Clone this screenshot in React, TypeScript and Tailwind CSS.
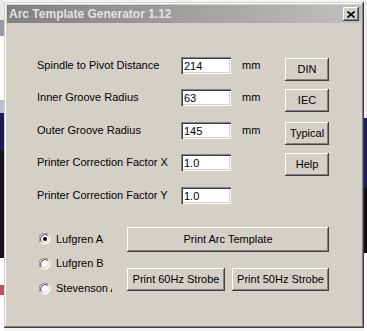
import React from 'react';

const font = { fontFamily: '"Liberation Sans", Arial, sans-serif' };

function Button({ label, className }: { label: string; className: string }) {
  return (
    <button
      className={`flex items-center justify-center bg-[#d4d0c8] text-[11px] text-black shadow-[inset_-1px_-1px_#404040,inset_1px_1px_#ffffff,inset_-2px_-2px_#808080,inset_2px_2px_#d4d0c8] ${className}`}
    >
      {label}
    </button>
  );
}

function Field({ value }: { value: string }) {
  return (
    <input
      defaultValue={value}
      className="h-[17px] w-[50px] bg-white pl-[3px] text-[11px] text-black outline-none shadow-[inset_1px_1px_#808080,inset_2px_2px_#404040,inset_-1px_-1px_#ffffff,inset_-2px_-2px_#d4d0c8]"
    />
  );
}

function Radio({ checked }: { checked?: boolean }) {
  return (
    <svg width="12" height="12" viewBox="0 0 12 12" className="shrink-0">
      <circle cx="6" cy="6" r="5" fill="#ffffff" />
      <path d="M1.6 9.5 A5.5 5.5 0 0 1 9.5 1.6" stroke="#808080" strokeWidth="1" fill="none" />
      <path d="M9.5 1.6 A5.5 5.5 0 0 1 1.6 9.5" stroke="#ffffff" strokeWidth="1" fill="none" />
      <path d="M2.5 8.8 A4.5 4.5 0 0 1 8.8 2.5" stroke="#404040" strokeWidth="1" fill="none" />
      <path d="M8.8 2.5 A4.5 4.5 0 0 1 2.5 8.8" stroke="#d4d0c8" strokeWidth="1" fill="none" />
      {checked && <circle cx="6" cy="6" r="2" fill="#000000" />}
    </svg>
  );
}

const rows = [
  { label: 'Spindle to Pivot Distance', value: '214', unit: 'mm' },
  { label: 'Inner Groove Radius', value: '63', unit: 'mm' },
  { label: 'Outer Groove Radius', value: '145', unit: 'mm' },
  { label: 'Printer Correction Factor X', value: '1.0', unit: '' },
  { label: 'Printer Correction Factor Y', value: '1.0', unit: '' },
];

const rowMargins = ['mt-0', 'mt-[15px]', 'mt-[16px]', 'mt-[15px]', 'mt-[16px]'];

export default function App() {
  return (
    <div className="flex h-[331px] w-[367px] overflow-hidden bg-[#f4f4f4]" style={font}>
      {/* background app peeking out on the left */}
      <div className="flex w-[4px] shrink-0 flex-col">
        <div className="h-[20px] bg-[#e9e9e9]" />
        <div className="h-[16px] bg-[#9a9aa8]" />
        <div className="h-[64px] bg-[#ffffff]" />
        <div className="h-[13px] bg-[#b8c0d8]" />
        <div className="h-[37px] bg-[#1c1c5c]" />
        <div className="h-[108px] bg-[#12121c]" />
        <div className="h-[27px] bg-[#ffffff]" />
        <div className="h-[10px] bg-[#c05060]" />
        <div className="flex-1 bg-[#ffffff]" />
      </div>

      {/* dialog window */}
      <div className="mt-[2px] flex h-[326px] w-[360px] shrink-0 flex-col bg-[#d4d0c8] p-[3px] shadow-[inset_-1px_-1px_#404040,inset_1px_1px_#d4d0c8,inset_-2px_-2px_#808080,inset_2px_2px_#ffffff]">
        <div className="flex h-[18px] items-center justify-between bg-gradient-to-r from-[#808080] to-[#c0c0c0] pl-[2px] pr-[2px]">
          <span className="text-[12px] font-bold text-[#e4e2dc]">Arc Template Generator 1.12</span>
          <div className="flex h-[14px] w-[16px] items-center justify-center bg-[#d4d0c8] shadow-[inset_-1px_-1px_#404040,inset_1px_1px_#ffffff,inset_-2px_-2px_#808080]">
            <svg width="8" height="7" viewBox="0 0 8 7">
              <path d="M0.5 0.5 L7.5 6.5 M7.5 0.5 L0.5 6.5" stroke="#000" strokeWidth="1.6" />
            </svg>
          </div>
        </div>

        <div className="mt-[34px] flex pl-[30px] pr-[32px]">
          <div className="flex flex-col">
            {rows.map((r, i) => (
              <div key={r.label} className={`flex h-[17px] items-center ${rowMargins[i]}`}>
                <span className="w-[144px] text-[11px] text-black">{r.label}</span>
                <Field value={r.value} />
                <span className="ml-[11px] text-[11px] text-black">{r.unit}</span>
              </div>
            ))}
          </div>
          <div className="ml-auto mt-[1px] flex flex-col gap-[8px]">
            <Button label="DIN" className="h-[23px] w-[44px]" />
            <Button label="IEC" className="h-[23px] w-[44px]" />
            <Button label="Typical" className="mt-[2px] h-[23px] w-[44px]" />
            <Button label="Help" className="h-[23px] w-[44px]" />
          </div>
        </div>

        <div className="mt-[23px] flex pl-[32px] pr-[32px]">
          <div className="flex w-[73px] flex-col overflow-hidden">
            {[
              { label: 'Lufgren A', checked: true, h: 'h-[24px]' },
              { label: 'Lufgren B', checked: false, h: 'h-[25px]' },
              { label: 'Stevenson A', checked: false, h: 'h-[25px]' },
            ].map((r) => (
              <div key={r.label} className={`flex items-center gap-[5px] whitespace-nowrap ${r.h}`}>
                <Radio checked={r.checked} />
                <span className="text-[11px] text-black">{r.label}</span>
              </div>
            ))}
          </div>
          <div className="ml-auto flex w-[202px] flex-col">
            <Button label="Print Arc Template" className="h-[25px] w-full" />
            <div className="mt-[16px] flex justify-between">
              <Button label="Print 60Hz Strobe" className="h-[23px] w-[98px]" />
              <Button label="Print 50Hz Strobe" className="h-[23px] w-[97px]" />
            </div>
          </div>
        </div>
      </div>

      {/* background app peeking out on the right */}
      <div className="flex w-[3px] shrink-0 flex-col">
        <div className="h-[118px] bg-[#eeeeee]" />
        <div className="h-[70px] bg-[#1c1c5c]" />
        <div className="h-[65px] bg-[#101010]" />
        <div className="flex-1 bg-[#ffffff]" />
      </div>
    </div>
  );
}
